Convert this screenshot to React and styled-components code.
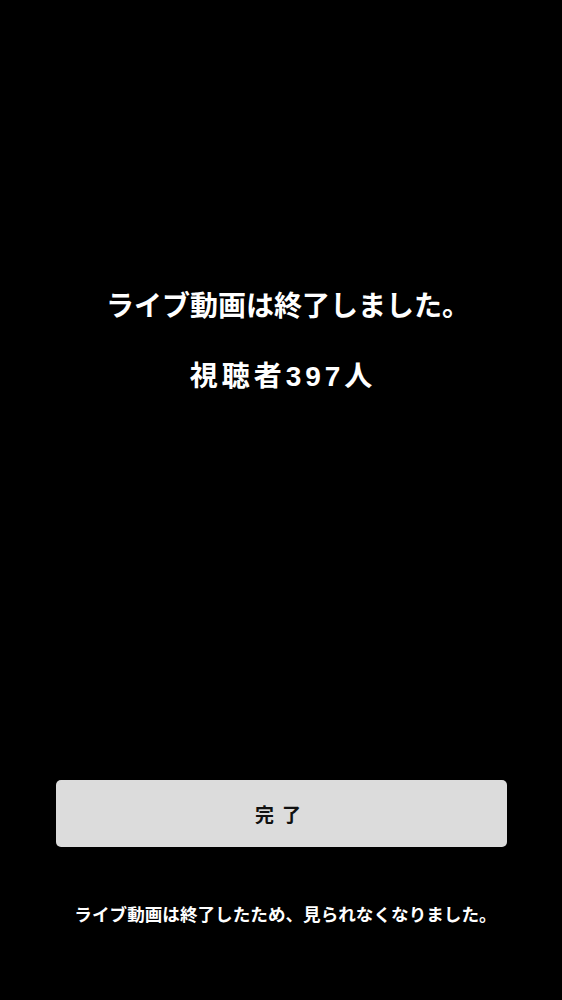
import React from 'react';
import styled, { createGlobalStyle } from 'styled-components';

const GlobalStyle = createGlobalStyle`
  html, body {
    margin: 0;
    padding: 0;
    background: #000;
  }
  body {
    font-family: "Liberation Sans", "Noto Sans CJK JP", sans-serif;
  }
`;

const Screen = styled.div`
  width: 562px;
  height: 1000px;
  background: #000;
  color: #fff;
  display: flex;
  flex-direction: column;
  align-items: center;
`;

const Message = styled.div`
  margin-top: 286px;
  display: flex;
  flex-direction: column;
  align-items: center;
  gap: 28px;
`;

const Title = styled.div`
  font-size: 28px;
  font-weight: 700;
  line-height: 42px;
  letter-spacing: ${p => (p.$wide ? '4px' : '0')};
  padding-left: ${p => (p.$wide ? '4px' : '14px')};
`;

const Spacer = styled.div`
  flex: 1;
`;

const DoneButton = styled.button`
  width: 451px;
  height: 67px;
  border: none;
  border-radius: 5px;
  background: #dcdcdc;
  color: #111;
  font-family: "Noto Sans CJK JP", "Noto Sans", sans-serif;
  font-size: 19px;
  font-weight: 700;
  letter-spacing: 8px;
  padding-left: 8px;
  cursor: pointer;
`;

const Note = styled.div`
  margin-top: 52px;
  margin-bottom: 71px;
  padding-left: 9px;
  font-family: "Noto Sans CJK JP", "Noto Sans", sans-serif;
  font-size: 17.6px;
  font-weight: 700;
  line-height: 30px;
`;

export default function App() {
  return (
    <>
      <GlobalStyle />
      <Screen>
        <Message>
          <Title>ライブ動画は終了しました。</Title>
          <Title $wide>視聴者397人</Title>
        </Message>
        <Spacer />
        <DoneButton>完了</DoneButton>
        <Note>ライブ動画は終了したため、見られなくなりました。</Note>
      </Screen>
    </>
  );
}
